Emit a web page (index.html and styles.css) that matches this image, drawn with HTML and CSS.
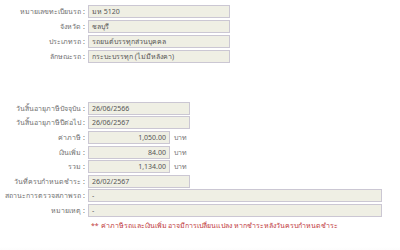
FILE: index.html
```html
<!DOCTYPE html>
<html lang="th">
<head>
<meta charset="utf-8">
<link rel="stylesheet" href="styles.css">
</head>
<body>
<div class="page">
  <div class="form form-top">
    <div class="lbl">หมายเลขทะเบียนรถ :</div><div class="fld w-wide">มห 5120</div>
    <div class="lbl">จังหวัด :</div><div class="fld w-wide">ชลบุรี</div>
    <div class="lbl">ประเภทรถ :</div><div class="fld w-wide">รถยนต์บรรทุกส่วนบุคคล</div>
    <div class="lbl">ลักษณะรถ :</div><div class="fld w-wide">กระบะบรรทุก (ไม่มีหลังคา)</div>
  </div>
  <div class="form form-bottom">
    <div class="lbl">วันสิ้นอายุภาษีปัจจุบัน :</div><div class="fld w-date">26/06/2566</div>
    <div class="lbl">วันสิ้นอายุภาษีปีต่อไป :</div><div class="fld w-date">26/06/2567</div>
    <div class="lbl">ค่าภาษี :</div><div class="money"><div class="fld num">1,050.00</div><span class="unit">บาท</span></div>
    <div class="lbl">เงินเพิ่ม :</div><div class="money"><div class="fld num">84.00</div><span class="unit">บาท</span></div>
    <div class="lbl">รวม :</div><div class="money"><div class="fld num">1,134.00</div><span class="unit">บาท</span></div>
    <div class="lbl">วันที่ครบกำหนดชำระ :</div><div class="fld w-date">26/02/2567</div>
    <div class="lbl">สถานะการตรวจสภาพรถ :</div><div class="fld w-full">-</div>
    <div class="lbl">หมายเหตุ :</div><div class="fld w-full">-</div>
    <div></div><div class="note">** ค่าภาษีรถและเงินเพิ่ม อาจมีการเปลี่ยนแปลง หากชำระหลังวันครบกำหนดชำระ</div>
  </div>
  <div class="footer-band"><div class="footer-tab"></div></div>
</div>
</body>
</html>
```
FILE: styles.css
```css
html, body {
  margin: 0;
  padding: 0;
  background: #ffffff;
}
body {
  font-family: Tahoma, "Noto Sans", "DejaVu Sans", sans-serif;
  font-size: 7px;
  color: #666;
}
.page {
  width: 400px;
  height: 250px;
  overflow: hidden;
  padding-top: 4px;
  box-sizing: border-box;
}
.form {
  display: grid;
  grid-template-columns: 85px 1fr;
  column-gap: 3px;
  align-items: center;
}
.form-top {
  grid-auto-rows: 15px;
}
.form-bottom {
  margin-top: 37px;
  grid-auto-rows: 14.6px;
}
.lbl {
  text-align: right;
  white-space: nowrap;
  color: #707070;
  line-height: 13px;
}
.fld {
  box-sizing: border-box;
  height: 13px;
  line-height: 11px;
  padding: 0 3px;
  background: #efefe4;
  border: 1px solid #cbc7d3;
  color: #555;
  white-space: nowrap;
  overflow: hidden;
}
.w-wide { width: 142px; }
.w-date { width: 102px; }
.w-full { width: 294px; }
.money {
  display: flex;
  align-items: center;
  gap: 4px;
}
.num {
  width: 82px;
  text-align: right;
}
.unit {
  color: #777;
}
.note {
  color: #c0393b;
  padding-left: 3px;
  line-height: 13px;
}
.footer-band {
  margin-top: 15px;
  height: 20px;
  background: linear-gradient(#ffffff, #f4f4f4 60%, #f6f6f6);
  position: relative;
}
.footer-tab {
  position: absolute;
  left: 110px;
  top: 12px;
  width: 60px;
  height: 8px;
  background: #fbfbfb;
}
```
